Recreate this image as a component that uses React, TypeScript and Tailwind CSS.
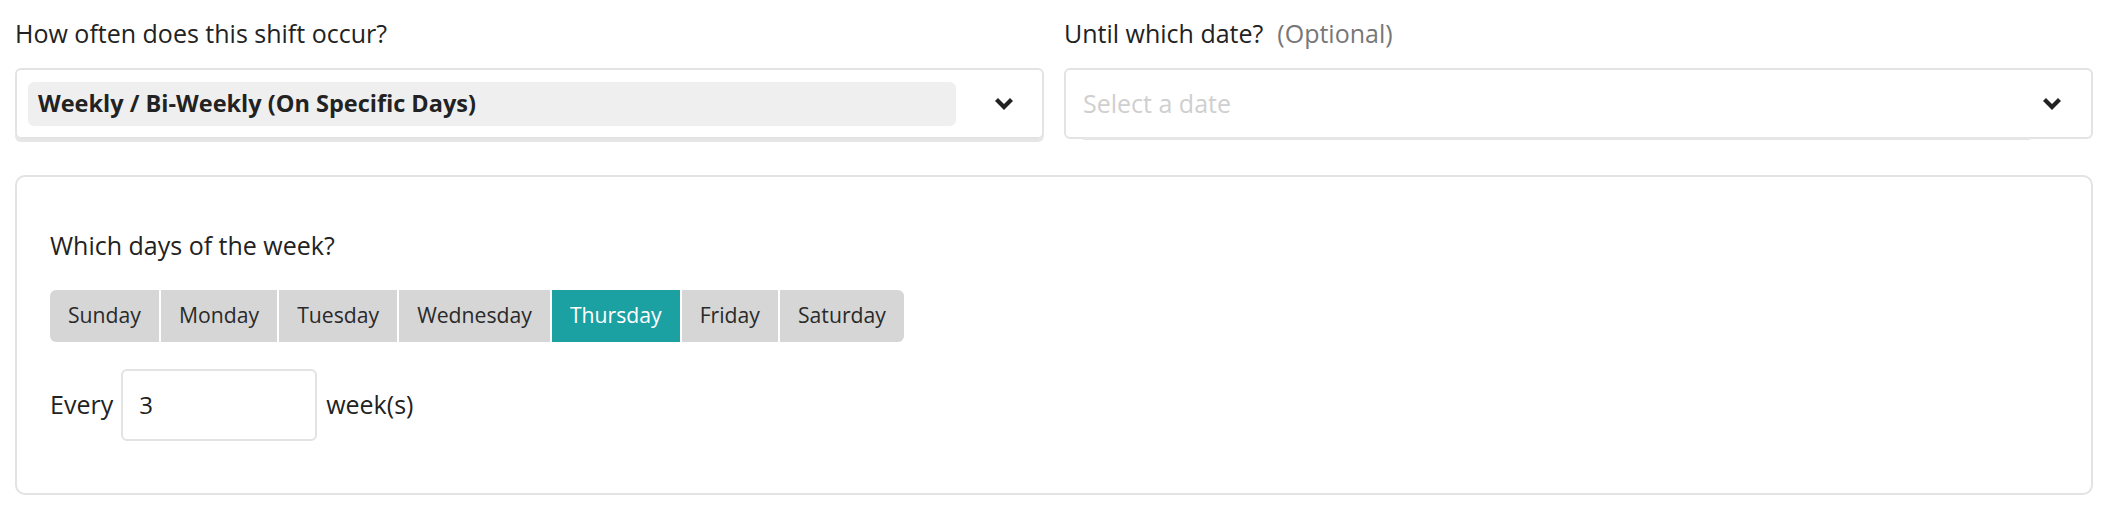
import React from 'react';

const DAYS = ['Sunday', 'Monday', 'Tuesday', 'Wednesday', 'Thursday', 'Friday', 'Saturday'];

const Chevron = () => (
  <svg width="20" height="13" viewBox="0 0 20 13" fill="none">
    <path d="M2.5 2.5 L10 10 L17.5 2.5" stroke="#222" strokeWidth="4.2" strokeLinecap="butt" strokeLinejoin="miter" />
  </svg>
);

const App: React.FC = () => {
  const selected = 'Thursday';

  return (
    <div className="w-full h-[518px] bg-white pl-[15px] pr-[33px] pt-[15px] text-[#222] font-['Open_Sans',sans-serif]">
      <div className="grid grid-cols-2 gap-[20px]">
        {/* Frequency */}
        <div>
          <label className="block text-[25px] leading-[36px] mb-[17px]">How often does this shift occur?</label>
          <div className="h-[71px] flex items-center border-2 border-[#e3e3e3] rounded-[6px] pl-[11px] shadow-[0_3px_0_#e6e6e6]">
            <div className="flex-1 h-[44px] flex items-center rounded-[6px] bg-[#efefef] px-[10px] text-[23.5px] font-bold">
              Weekly / Bi-Weekly (On Specific Days)
            </div>
            <div className="ml-[38px] mr-[28px] flex items-center">
              <Chevron />
            </div>
          </div>
        </div>

        {/* End date */}
        <div>
          <label className="block text-[25px] leading-[36px] mb-[17px]">
            Until which date?
            <span className="ml-[14px] text-[#777]">(Optional)</span>
          </label>
          <div className="h-[71px] flex items-stretch border-2 border-[#e3e3e3] rounded-[6px]">
            <div className="flex-1 ml-[17px] flex items-center text-[25px] text-[#cfcfcf] shadow-[0_3px_0_#e6e6e6]">
              Select a date
            </div>
            <div className="ml-[12px] mr-[29px] flex items-center">
              <Chevron />
            </div>
          </div>
        </div>
      </div>

      {/* Recurrence panel */}
      <div className="mt-[36px] h-[320px] border-2 border-[#e3e3e3] rounded-[10px] pt-[50px] pl-[33px]">
        <p className="text-[25px] leading-[36px] mb-[27px]">Which days of the week?</p>
        <div className="inline-flex gap-[2px] rounded-[6px] overflow-hidden">
          {DAYS.map((d) => (
            <button
              key={d}
              className={`h-[52px] px-[18px] pb-[3px] text-[21.2px] ${
                d === selected ? 'bg-[#1ba1a2] text-white' : 'bg-[#d6d6d6] text-[#2a2a2a]'
              }`}
            >
              {d}
            </button>
          ))}
        </div>
        <div className="mt-[27px] flex items-center text-[25px]">
          <span>Every</span>
          <div className="ml-[8px] mr-[9px] w-[196px] h-[72px] flex items-center border-2 border-[#e3e3e3] rounded-[6px] px-[16px] text-[24px]">
            3
          </div>
          <span>week(s)</span>
        </div>
      </div>
    </div>
  );
};

export default App;
